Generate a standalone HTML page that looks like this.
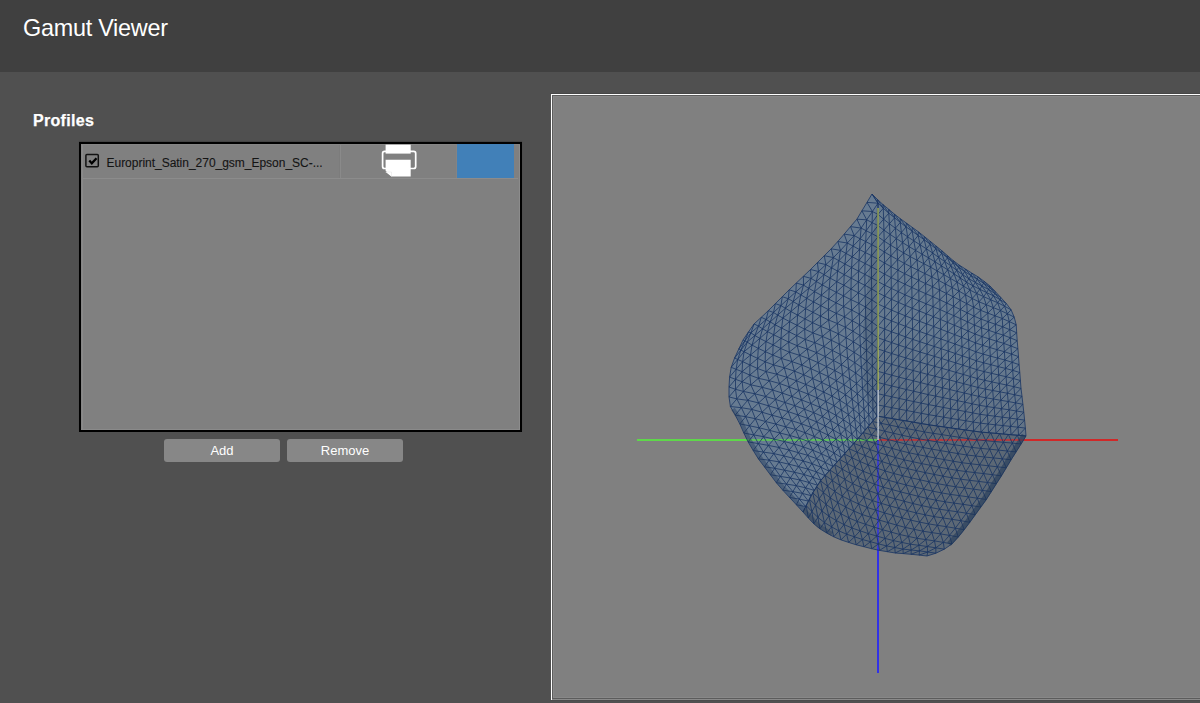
<!DOCTYPE html>
<html><head><meta charset="utf-8">
<style>
html,body{margin:0;padding:0;}
body{width:1200px;height:703px;overflow:hidden;background:#505050;position:relative;font-family:"Liberation Sans",sans-serif;}
.abs{position:absolute;}
#hdr{left:0;top:0;width:1200px;height:72px;background:#404040;}
#title{left:23px;top:15px;font-size:23.4px;color:#fff;white-space:nowrap;letter-spacing:-0.25px;}
#prof{left:33px;top:112px;font-size:16px;font-weight:bold;color:#fff;white-space:nowrap;letter-spacing:0.3px;-webkit-text-stroke:0.25px #fff;}
#list{left:79px;top:142px;width:439px;height:286px;border:2px solid #000;background:#808080;box-shadow:0 -1px 1px rgba(0,0,0,0.15);}
#listin{left:0;top:0;width:437px;height:284px;border:1px solid #8a8a8a;}
#row{left:1px;top:1px;width:436px;height:34px;background:#808080;border-bottom:1px solid #8c8c8c;}
#cb{left:85px;top:154px;width:11px;height:11px;border:1.5px solid #111;border-radius:1.5px;}
#rowtxt{left:106.5px;top:155.5px;font-size:12px;color:#141414;-webkit-text-stroke:0.1px #141414;white-space:nowrap;letter-spacing:-0.02px;}
#sep1{left:258px;top:0;width:1px;height:34px;background:#8a8a8a;}
#sep2{left:374px;top:0;width:1px;height:34px;background:#868686;}
#swatch{left:457px;top:144px;width:57px;height:34px;background:#4180b8;}
.btn{top:439px;height:23px;background:#878787;border-radius:3px;color:#fff;font-size:13px;text-align:center;line-height:23px;}
#add{left:164px;width:116px;}
#rem{left:287px;width:116px;}
#view{left:551px;top:94px;width:700px;height:606px;}
</style></head>
<body>
<div id="hdr" class="abs"></div>
<div id="title" class="abs">Gamut Viewer</div>
<div id="prof" class="abs">Profiles</div>
<div id="list" class="abs"></div>
<div class="abs" style="left:81px;top:144px;width:1px;height:286px;background:#858585"></div>
<div class="abs" style="left:82px;top:144px;width:1px;height:286px;background:#8a8a8a"></div>
<div class="abs" style="left:81px;top:429px;width:439px;height:1px;background:#8a8a8a"></div>
<div class="abs" style="left:519px;top:144px;width:1px;height:286px;background:#8c8c8c"></div>
<div class="abs" style="left:81px;top:144px;width:439px;height:1px;background:#858585"></div>
<div class="abs" style="left:83px;top:178px;width:435px;height:1px;background:#8c8c8c"></div>
<svg class="abs" style="left:82px;top:150px" width="22" height="22" viewBox="0 0 22 22"><rect x="3.9" y="4.6" width="12.4" height="12.2" rx="1" fill="none" stroke="#111" stroke-width="1.5"/><path d="M7.3 10.6 L9.8 13.4 L14.5 8.3" fill="none" stroke="#000" stroke-width="2.3"/></svg>
<div id="rowtxt" class="abs">Europrint_Satin_270_gsm_Epson_SC-...</div>
<div class="abs" style="left:340px;top:145px;width:1px;height:33px;background:#8a8a8a"></div>
<div class="abs" style="left:339px;top:145px;width:1px;height:33px;background:#7c7c7c"></div>
<svg class="abs" style="left:378px;top:142px" width="42" height="38" viewBox="0 0 42 38">
  <rect x="7.6" y="2.7" width="25.1" height="8.9" fill="#fff"/>
  <rect x="4.6" y="9.4" width="33.1" height="17.1" rx="2" fill="none" stroke="#fff" stroke-width="1.7"/>
  <path d="M7.6 17.8 H32.7 V34.6 H13.5 L7.6 28.7 Z" fill="#fff"/>
  <path d="M7.6 30 H13.5 V34.6 Z" fill="#fff"/>
  <path d="M7.6 30 H13.5 V34.6" fill="none" stroke="#e0e0e0" stroke-width="0.5"/>
</svg>
<div class="abs" style="left:456px;top:144px;width:1px;height:34px;background:#848484"></div>
<div id="swatch" class="abs"></div>
<div id="add" class="abs btn">Add</div>
<div id="rem" class="abs btn">Remove</div>
<div class="abs" style="left:550px;top:93px;width:650px;height:1px;background:#474747"></div>
<div class="abs" style="left:550px;top:700px;width:650px;height:1px;background:#4b4b4b"></div>
<div id="view" class="abs">
<svg width="649" height="609" style="position:absolute;left:0;top:0">
  <rect x="0" y="0" width="649" height="606" fill="#ffffff"/>
  <rect x="1" y="1" width="649" height="605" fill="#8a8a8a"/>
  <rect x="1" y="1" width="649" height="604" fill="#5c5c5c"/>
  <rect x="2" y="2" width="649" height="602" fill="#888"/>
  <rect x="3" y="3" width="649" height="600" fill="#808080"/>
</svg>
</div>
<svg id="mesh" class="abs" style="left:0;top:0" width="1200" height="703">
  <defs><linearGradient id="gB" gradientUnits="userSpaceOnUse" x1="930" y1="330" x2="890" y2="430"><stop offset="0" stop-color="#667a8f"/><stop offset="1" stop-color="#5f6d7d"/></linearGradient></defs>
<polygon points="872.0,194.0 878.0,203.2 878.0,214.4 878.0,225.6 878.0,236.8 878.0,248.0 878.0,259.2 878.0,270.4 878.0,281.6 878.0,292.8 878.0,304.0 877.9,315.2 877.8,326.4 877.7,337.6 877.6,348.8 877.5,360.0 877.4,371.2 877.3,382.4 877.2,393.6 877.1,404.8 877.0,416.0 877.0,416.0 873.1,420.7 869.2,425.3 865.2,430.0 861.3,434.7 857.4,439.3 853.4,443.9 849.3,448.4 845.2,453.0 841.2,457.5 837.1,462.0 833.0,466.5 829.0,471.1 824.9,475.6 820.9,480.2 817.6,485.3 814.3,490.4 811.2,495.7 808.4,501.1 805.7,506.6 803.0,512.0 803.0,512.0 796.3,504.7 789.5,497.4 782.8,490.2 776.3,482.7 770.3,474.7 764.4,466.8 758.4,458.9 753.2,450.5 748.1,441.9 743.8,433.0 739.8,423.9 735.2,415.1 730.4,406.5 729.0,396.9 729.0,387.0 729.6,377.1 731.2,367.3 734.6,358.0 738.8,349.0 743.0,340.0 743.0,340.0 748.5,331.9 754.1,323.9 761.3,317.3 768.4,310.6 775.4,303.6 782.3,296.7 789.2,289.8 796.3,283.0 803.4,276.3 810.5,269.5 817.4,262.6 824.3,255.7 831.2,248.8 837.8,241.5 844.2,234.1 850.5,226.6 856.9,219.2 861.9,210.8 867.0,202.4 872.0,194.0" fill="#677b91"/>
<polygon points="872.0,194.0 878.0,203.2 878.0,214.4 878.0,225.6 878.0,236.8 878.0,248.0 878.0,259.2 878.0,270.4 878.0,281.6 878.0,292.8 878.0,304.0 877.9,315.2 877.8,326.4 877.7,337.6 877.6,348.8 877.5,360.0 877.4,371.2 877.3,382.4 877.2,393.6 877.1,404.8 877.0,416.0 877.0,416.0 884.4,417.3 891.8,418.5 899.2,419.8 906.7,421.0 914.1,422.3 921.5,423.6 928.9,424.8 936.3,425.9 943.8,426.9 951.2,428.0 958.7,429.0 966.1,430.1 973.6,431.1 981.0,432.1 988.5,432.7 996.0,433.4 1003.5,434.0 1011.0,434.7 1018.5,435.3 1026.0,436.0 1026.0,436.0 1025.4,428.1 1024.6,420.1 1023.8,412.2 1022.9,404.3 1022.0,396.3 1021.0,388.4 1020.4,380.5 1019.8,372.5 1019.1,364.6 1018.5,356.6 1017.9,348.7 1017.2,340.7 1016.7,332.8 1016.2,324.8 1014.2,317.1 1011.1,309.8 1006.3,303.5 1000.9,297.6 995.5,291.8 990.0,286.0 990.0,286.0 984.1,281.3 978.1,276.9 971.7,273.0 965.4,269.0 959.1,265.0 953.1,260.5 947.4,255.6 941.7,250.6 935.9,245.9 930.1,241.2 924.3,236.5 918.4,231.8 912.3,227.4 906.3,223.0 900.2,218.6 894.3,214.0 888.6,209.2 882.8,204.4 877.3,199.3 872.0,194.0" fill="url(#gB)"/>
<polygon points="877.0,416.0 885.7,417.5 894.4,419.0 903.2,420.4 911.9,421.9 920.6,423.4 929.3,424.9 938.1,426.1 946.9,427.4 955.6,428.6 964.4,429.8 973.2,431.0 981.9,432.2 990.7,432.9 999.6,433.7 1008.4,434.5 1017.2,435.2 1026.0,436.0 1026.0,436.0 1021.1,444.0 1016.1,451.9 1011.1,459.8 1006.3,467.8 1001.4,475.9 996.4,483.7 991.4,491.6 986.3,499.5 980.8,507.1 975.3,514.7 969.8,522.3 964.2,529.7 958.3,537.0 952.0,543.9 944.3,549.2 935.9,553.2 927.0,556.0 927.0,556.0 919.1,555.1 911.1,554.3 903.2,553.6 895.2,553.0 887.3,551.7 879.5,550.4 871.7,548.7 863.9,546.7 856.2,544.8 848.6,542.4 841.0,539.9 833.7,536.8 826.7,533.0 819.9,528.8 813.8,523.8 808.3,518.0 803.0,512.0 803.0,512.0 806.2,505.6 809.4,499.2 812.7,492.8 816.6,486.8 820.5,480.8 825.2,475.4 829.9,470.0 834.7,464.7 839.5,459.3 844.3,454.0 849.1,448.7 853.9,443.4 858.6,437.9 863.2,432.5 867.8,427.0 872.4,421.5 877.0,416.0" fill="#5c6875"/>
<rect x="637" y="439" width="110" height="2" fill="#5ed84a"/>
<rect x="747" y="439" width="131" height="2" fill="#5ed84a" fill-opacity="0.7"/>
<rect x="878" y="439" width="146" height="2" fill="#d02828" fill-opacity="0.7"/>
<rect x="1024" y="439" width="94" height="2" fill="#d02828"/>
<rect x="877" y="440" width="2" height="108" fill="#3232e6" fill-opacity="0.75"/>
<rect x="877" y="548" width="2" height="125" fill="#3232e6"/>
<path d="M872.0,194.0 878.0,203.2 878.0,214.4 878.0,225.6 878.0,236.8 878.0,248.0 878.0,259.2 878.0,270.4 878.0,281.6 878.0,292.8 878.0,304.0 877.9,315.2 877.8,326.4 877.7,337.6 877.6,348.8 877.5,360.0 877.4,371.2 877.3,382.4 877.2,393.6 877.1,404.8 877.0,416.0 M867.0,202.4 872.4,211.5 872.1,222.6 871.8,233.6 871.7,244.7 871.6,255.7 871.5,266.8 871.5,277.9 871.6,288.9 871.8,299.9 871.9,310.9 871.9,322.0 872.0,333.0 872.1,344.0 872.2,354.9 872.3,365.9 872.4,376.9 872.6,387.8 872.8,398.8 872.9,409.7 873.1,420.7 M861.9,210.8 866.7,219.8 866.2,230.7 865.7,241.6 865.3,252.5 865.1,263.5 864.9,274.4 864.9,285.3 865.2,296.2 865.5,307.0 865.7,317.9 865.9,328.7 866.2,339.5 866.5,350.3 866.8,361.1 867.1,371.8 867.5,382.6 867.9,393.3 868.3,404.0 868.7,414.6 869.2,425.3 M856.9,219.2 861.1,228.1 860.2,238.8 859.5,249.6 859.0,260.4 858.6,271.2 858.4,282.0 858.4,292.8 858.9,303.4 859.3,314.1 859.6,324.8 859.9,335.5 860.4,346.1 860.8,356.7 861.4,367.2 862.0,377.7 862.5,388.2 863.2,398.7 863.9,409.1 864.6,419.6 865.2,430.0 M850.5,226.6 854.2,235.6 853.1,246.1 852.2,256.8 851.6,267.5 851.2,278.2 851.0,289.0 851.0,299.6 851.7,310.1 852.3,320.7 852.9,331.2 853.4,341.8 854.1,352.3 854.8,362.7 855.6,373.0 856.5,383.4 857.3,393.7 858.3,404.0 859.3,414.2 860.3,424.4 861.3,434.7 M844.2,234.1 847.3,243.0 846.0,253.4 844.9,264.0 844.2,274.6 843.8,285.2 843.5,295.9 843.6,306.5 844.5,316.8 845.4,327.2 846.1,337.7 846.8,348.1 847.7,358.4 848.7,368.7 849.8,378.9 851.0,389.1 852.1,399.2 853.4,409.3 854.7,419.3 856.1,429.3 857.4,439.3 M837.8,241.5 840.5,250.4 838.9,260.7 837.6,271.1 836.8,281.7 836.3,292.3 836.0,302.8 836.2,313.3 837.3,323.5 838.4,333.8 839.3,344.1 840.2,354.4 841.4,364.6 842.6,374.7 844.0,384.7 845.4,394.7 846.8,404.7 848.4,414.5 850.1,424.3 851.7,434.1 853.4,443.9 M831.2,248.8 833.4,257.6 831.6,267.8 830.1,278.1 829.2,288.6 828.7,299.1 828.4,309.6 828.6,320.0 830.0,330.1 831.2,340.2 832.3,350.4 833.5,360.5 834.8,370.6 836.3,380.6 838.0,390.4 839.7,400.2 841.4,410.0 843.4,419.7 845.3,429.2 847.3,438.8 849.3,448.4 M824.3,255.7 825.9,264.6 824.0,274.6 822.3,284.9 821.3,295.3 820.8,305.7 820.5,316.1 820.7,326.4 822.4,336.4 823.9,346.4 825.2,356.5 826.5,366.6 828.2,376.5 829.9,386.3 832.0,396.0 834.0,405.6 836.0,415.3 838.2,424.8 840.6,434.2 842.9,443.6 845.2,453.0 M817.4,262.6 818.5,271.5 816.3,281.5 814.5,291.6 813.5,301.9 812.9,312.3 812.6,322.7 812.9,332.9 814.8,342.7 816.6,352.6 818.1,362.6 819.6,372.6 821.6,382.4 823.6,392.1 825.9,401.6 828.2,411.1 830.5,420.6 833.1,429.9 835.8,439.1 838.5,448.3 841.2,457.5 M810.5,269.5 811.1,278.4 808.7,288.3 806.7,298.3 805.6,308.6 805.0,318.9 804.7,329.2 805.1,339.4 807.2,349.1 809.2,358.8 810.9,368.7 812.7,378.6 814.9,388.2 817.2,397.8 819.8,407.2 822.5,416.5 825.1,425.9 828.0,435.0 831.0,444.0 834.1,453.0 837.1,462.0 M803.4,276.3 803.5,285.1 800.9,294.9 798.8,304.9 797.6,315.1 797.0,325.3 796.7,335.6 797.2,345.7 799.6,355.3 801.8,365.0 803.7,374.8 805.8,384.5 808.2,394.1 810.8,403.5 813.7,412.7 816.7,421.9 819.6,431.1 822.9,440.0 826.3,448.9 829.7,457.7 833.0,466.5 M796.3,283.0 795.9,291.9 793.2,301.6 790.9,311.5 789.6,321.6 789.0,331.8 788.7,342.1 789.3,352.1 791.9,361.6 794.4,371.1 796.5,380.8 798.8,390.5 801.5,399.9 804.4,409.2 807.6,418.3 810.9,427.3 814.2,436.4 817.8,445.1 821.5,453.8 825.2,462.4 829.0,471.1 M789.2,289.8 788.3,298.7 785.4,308.3 782.9,318.1 781.6,328.1 781.0,338.3 780.7,348.5 781.3,358.4 784.3,367.8 786.9,377.3 789.3,386.9 791.8,396.4 794.8,405.7 797.9,414.9 801.5,423.8 805.1,432.7 808.7,441.6 812.6,450.2 816.7,458.7 820.8,467.2 824.9,475.6 M782.3,296.7 780.9,305.6 777.7,315.1 775.1,324.8 773.7,334.8 773.1,344.9 772.8,355.0 773.5,364.9 776.7,374.2 779.6,383.5 782.2,393.0 784.9,402.5 788.2,411.6 791.6,420.7 795.5,429.4 799.4,438.2 803.3,446.9 807.6,455.3 812.0,463.6 816.4,471.9 820.9,480.2 M775.4,303.6 773.5,312.5 770.2,321.9 767.5,331.6 766.0,341.6 765.4,351.7 765.2,361.8 766.0,371.6 769.4,380.7 772.6,390.0 775.5,399.4 778.5,408.8 782.0,417.9 785.7,426.9 790.0,435.5 794.2,444.1 798.4,452.7 803.1,460.9 807.9,469.1 812.8,477.2 817.6,485.3 M768.4,310.6 766.1,319.5 762.6,328.8 759.8,338.4 758.3,348.4 757.7,358.4 757.5,368.5 758.4,378.3 762.2,387.3 765.6,396.5 768.7,405.9 772.0,415.2 775.8,424.1 779.9,433.0 784.4,441.5 789.0,450.0 793.6,458.4 798.6,466.6 803.9,474.5 809.1,482.5 814.3,490.4 M761.3,317.3 758.5,326.2 754.9,335.5 752.0,345.1 750.5,355.0 749.9,365.0 749.8,375.1 750.8,384.8 754.9,393.8 758.6,402.9 762.0,412.2 765.5,421.5 769.7,430.4 774.0,439.1 779.0,447.5 783.9,455.9 788.9,464.2 794.3,472.2 799.9,480.0 805.6,487.8 811.2,495.7 M754.1,323.9 750.9,332.9 747.2,342.1 744.1,351.7 742.6,361.6 742.1,371.6 742.1,381.7 743.3,391.4 747.7,400.3 751.7,409.4 755.4,418.7 759.2,427.8 763.7,436.7 768.4,445.4 773.8,453.6 779.1,461.9 784.5,470.2 790.3,478.0 796.4,485.7 802.4,493.4 808.4,501.1 M748.5,331.9 744.8,340.9 740.9,350.1 737.7,359.5 736.1,369.3 735.5,379.3 735.5,389.3 736.8,398.9 741.4,407.7 745.7,416.7 749.6,425.8 753.7,434.9 758.4,443.6 763.4,452.1 769.1,460.2 774.7,468.3 780.4,476.4 786.5,484.1 792.9,491.6 799.3,499.1 805.7,506.6 M743.0,340.0 738.8,349.0 734.6,358.0 731.2,367.3 729.6,377.1 729.0,387.0 729.0,396.9 730.4,406.5 735.2,415.1 739.8,423.9 743.8,433.0 748.1,441.9 753.2,450.5 758.4,458.9 764.4,466.8 770.3,474.7 776.3,482.7 782.8,490.2 789.5,497.4 796.3,504.7 803.0,512.0 M872.0,194.0 867.0,202.4 861.9,210.8 856.9,219.2 850.5,226.6 844.2,234.1 837.8,241.5 831.2,248.8 824.3,255.7 817.4,262.6 810.5,269.5 803.4,276.3 796.3,283.0 789.2,289.8 782.3,296.7 775.4,303.6 768.4,310.6 761.3,317.3 754.1,323.9 748.5,331.9 743.0,340.0 M878.0,203.2 872.4,211.5 866.7,219.8 861.1,228.1 854.2,235.6 847.3,243.0 840.5,250.4 833.4,257.6 825.9,264.6 818.5,271.5 811.1,278.4 803.5,285.1 795.9,291.9 788.3,298.7 780.9,305.6 773.5,312.5 766.1,319.5 758.5,326.2 750.9,332.9 744.8,340.9 738.8,349.0 M878.0,214.4 872.1,222.6 866.2,230.7 860.2,238.8 853.1,246.1 846.0,253.4 838.9,260.7 831.6,267.8 824.0,274.6 816.3,281.5 808.7,288.3 800.9,294.9 793.2,301.6 785.4,308.3 777.7,315.1 770.2,321.9 762.6,328.8 754.9,335.5 747.2,342.1 740.9,350.1 734.6,358.0 M878.0,225.6 871.8,233.6 865.7,241.6 859.5,249.6 852.2,256.8 844.9,264.0 837.6,271.1 830.1,278.1 822.3,284.9 814.5,291.6 806.7,298.3 798.8,304.9 790.9,311.5 782.9,318.1 775.1,324.8 767.5,331.6 759.8,338.4 752.0,345.1 744.1,351.7 737.7,359.5 731.2,367.3 M878.0,236.8 871.7,244.7 865.3,252.5 859.0,260.4 851.6,267.5 844.2,274.6 836.8,281.7 829.2,288.6 821.3,295.3 813.5,301.9 805.6,308.6 797.6,315.1 789.6,321.6 781.6,328.1 773.7,334.8 766.0,341.6 758.3,348.4 750.5,355.0 742.6,361.6 736.1,369.3 729.6,377.1 M878.0,248.0 871.6,255.7 865.1,263.5 858.6,271.2 851.2,278.2 843.8,285.2 836.3,292.3 828.7,299.1 820.8,305.7 812.9,312.3 805.0,318.9 797.0,325.3 789.0,331.8 781.0,338.3 773.1,344.9 765.4,351.7 757.7,358.4 749.9,365.0 742.1,371.6 735.5,379.3 729.0,387.0 M878.0,259.2 871.5,266.8 864.9,274.4 858.4,282.0 851.0,289.0 843.5,295.9 836.0,302.8 828.4,309.6 820.5,316.1 812.6,322.7 804.7,329.2 796.7,335.6 788.7,342.1 780.7,348.5 772.8,355.0 765.2,361.8 757.5,368.5 749.8,375.1 742.1,381.7 735.5,389.3 729.0,396.9 M878.0,270.4 871.5,277.9 864.9,285.3 858.4,292.8 851.0,299.6 843.6,306.5 836.2,313.3 828.6,320.0 820.7,326.4 812.9,332.9 805.1,339.4 797.2,345.7 789.3,352.1 781.3,358.4 773.5,364.9 766.0,371.6 758.4,378.3 750.8,384.8 743.3,391.4 736.8,398.9 730.4,406.5 M878.0,281.6 871.6,288.9 865.2,296.2 858.9,303.4 851.7,310.1 844.5,316.8 837.3,323.5 830.0,330.1 822.4,336.4 814.8,342.7 807.2,349.1 799.6,355.3 791.9,361.6 784.3,367.8 776.7,374.2 769.4,380.7 762.2,387.3 754.9,393.8 747.7,400.3 741.4,407.7 735.2,415.1 M878.0,292.8 871.8,299.9 865.5,307.0 859.3,314.1 852.3,320.7 845.4,327.2 838.4,333.8 831.2,340.2 823.9,346.4 816.6,352.6 809.2,358.8 801.8,365.0 794.4,371.1 786.9,377.3 779.6,383.5 772.6,390.0 765.6,396.5 758.6,402.9 751.7,409.4 745.7,416.7 739.8,423.9 M878.0,304.0 871.9,310.9 865.7,317.9 859.6,324.8 852.9,331.2 846.1,337.7 839.3,344.1 832.3,350.4 825.2,356.5 818.1,362.6 810.9,368.7 803.7,374.8 796.5,380.8 789.3,386.9 782.2,393.0 775.5,399.4 768.7,405.9 762.0,412.2 755.4,418.7 749.6,425.8 743.8,433.0 M877.9,315.2 871.9,322.0 865.9,328.7 859.9,335.5 853.4,341.8 846.8,348.1 840.2,354.4 833.5,360.5 826.5,366.6 819.6,372.6 812.7,378.6 805.8,384.5 798.8,390.5 791.8,396.4 784.9,402.5 778.5,408.8 772.0,415.2 765.5,421.5 759.2,427.8 753.7,434.9 748.1,441.9 M877.8,326.4 872.0,333.0 866.2,339.5 860.4,346.1 854.1,352.3 847.7,358.4 841.4,364.6 834.8,370.6 828.2,376.5 821.6,382.4 814.9,388.2 808.2,394.1 801.5,399.9 794.8,405.7 788.2,411.6 782.0,417.9 775.8,424.1 769.7,430.4 763.7,436.7 758.4,443.6 753.2,450.5 M877.7,337.6 872.1,344.0 866.5,350.3 860.8,356.7 854.8,362.7 848.7,368.7 842.6,374.7 836.3,380.6 829.9,386.3 823.6,392.1 817.2,397.8 810.8,403.5 804.4,409.2 797.9,414.9 791.6,420.7 785.7,426.9 779.9,433.0 774.0,439.1 768.4,445.4 763.4,452.1 758.4,458.9 M877.6,348.8 872.2,354.9 866.8,361.1 861.4,367.2 855.6,373.0 849.8,378.9 844.0,384.7 838.0,390.4 832.0,396.0 825.9,401.6 819.8,407.2 813.7,412.7 807.6,418.3 801.5,423.8 795.5,429.4 790.0,435.5 784.4,441.5 779.0,447.5 773.8,453.6 769.1,460.2 764.4,466.8 M877.5,360.0 872.3,365.9 867.1,371.8 862.0,377.7 856.5,383.4 851.0,389.1 845.4,394.7 839.7,400.2 834.0,405.6 828.2,411.1 822.5,416.5 816.7,421.9 810.9,427.3 805.1,432.7 799.4,438.2 794.2,444.1 789.0,450.0 783.9,455.9 779.1,461.9 774.7,468.3 770.3,474.7 M877.4,371.2 872.4,376.9 867.5,382.6 862.5,388.2 857.3,393.7 852.1,399.2 846.8,404.7 841.4,410.0 836.0,415.3 830.5,420.6 825.1,425.9 819.6,431.1 814.2,436.4 808.7,441.6 803.3,446.9 798.4,452.7 793.6,458.4 788.9,464.2 784.5,470.2 780.4,476.4 776.3,482.7 M877.3,382.4 872.6,387.8 867.9,393.3 863.2,398.7 858.3,404.0 853.4,409.3 848.4,414.5 843.4,419.7 838.2,424.8 833.1,429.9 828.0,435.0 822.9,440.0 817.8,445.1 812.6,450.2 807.6,455.3 803.1,460.9 798.6,466.6 794.3,472.2 790.3,478.0 786.5,484.1 782.8,490.2 M877.2,393.6 872.8,398.8 868.3,404.0 863.9,409.1 859.3,414.2 854.7,419.3 850.1,424.3 845.3,429.2 840.6,434.2 835.8,439.1 831.0,444.0 826.3,448.9 821.5,453.8 816.7,458.7 812.0,463.6 807.9,469.1 803.9,474.5 799.9,480.0 796.4,485.7 792.9,491.6 789.5,497.4 M877.1,404.8 872.9,409.7 868.7,414.6 864.6,419.6 860.3,424.4 856.1,429.3 851.7,434.1 847.3,438.8 842.9,443.6 838.5,448.3 834.1,453.0 829.7,457.7 825.2,462.4 820.8,467.2 816.4,471.9 812.8,477.2 809.1,482.5 805.6,487.8 802.4,493.4 799.3,499.1 796.3,504.7 M877.0,416.0 873.1,420.7 869.2,425.3 865.2,430.0 861.3,434.7 857.4,439.3 853.4,443.9 849.3,448.4 845.2,453.0 841.2,457.5 837.1,462.0 833.0,466.5 829.0,471.1 824.9,475.6 820.9,480.2 817.6,485.3 814.3,490.4 811.2,495.7 808.4,501.1 805.7,506.6 803.0,512.0 M878.0,203.2 867.0,202.4 M878.0,214.4 872.4,211.5 861.9,210.8 M878.0,225.6 872.1,222.6 866.7,219.8 856.9,219.2 M878.0,236.8 871.8,233.6 866.2,230.7 861.1,228.1 850.5,226.6 M878.0,248.0 871.7,244.7 865.7,241.6 860.2,238.8 854.2,235.6 844.2,234.1 M878.0,259.2 871.6,255.7 865.3,252.5 859.5,249.6 853.1,246.1 847.3,243.0 837.8,241.5 M878.0,270.4 871.5,266.8 865.1,263.5 859.0,260.4 852.2,256.8 846.0,253.4 840.5,250.4 831.2,248.8 M878.0,281.6 871.5,277.9 864.9,274.4 858.6,271.2 851.6,267.5 844.9,264.0 838.9,260.7 833.4,257.6 824.3,255.7 M878.0,292.8 871.6,288.9 864.9,285.3 858.4,282.0 851.2,278.2 844.2,274.6 837.6,271.1 831.6,267.8 825.9,264.6 817.4,262.6 M878.0,304.0 871.8,299.9 865.2,296.2 858.4,292.8 851.0,289.0 843.8,285.2 836.8,281.7 830.1,278.1 824.0,274.6 818.5,271.5 810.5,269.5 M877.9,315.2 871.9,310.9 865.5,307.0 858.9,303.4 851.0,299.6 843.5,295.9 836.3,292.3 829.2,288.6 822.3,284.9 816.3,281.5 811.1,278.4 803.4,276.3 M877.8,326.4 871.9,322.0 865.7,317.9 859.3,314.1 851.7,310.1 843.6,306.5 836.0,302.8 828.7,299.1 821.3,295.3 814.5,291.6 808.7,288.3 803.5,285.1 796.3,283.0 M877.7,337.6 872.0,333.0 865.9,328.7 859.6,324.8 852.3,320.7 844.5,316.8 836.2,313.3 828.4,309.6 820.8,305.7 813.5,301.9 806.7,298.3 800.9,294.9 795.9,291.9 789.2,289.8 M877.6,348.8 872.1,344.0 866.2,339.5 859.9,335.5 852.9,331.2 845.4,327.2 837.3,323.5 828.6,320.0 820.5,316.1 812.9,312.3 805.6,308.6 798.8,304.9 793.2,301.6 788.3,298.7 782.3,296.7 M877.5,360.0 872.2,354.9 866.5,350.3 860.4,346.1 853.4,341.8 846.1,337.7 838.4,333.8 830.0,330.1 820.7,326.4 812.6,322.7 805.0,318.9 797.6,315.1 790.9,311.5 785.4,308.3 780.9,305.6 775.4,303.6 M877.4,371.2 872.3,365.9 866.8,361.1 860.8,356.7 854.1,352.3 846.8,348.1 839.3,344.1 831.2,340.2 822.4,336.4 812.9,332.9 804.7,329.2 797.0,325.3 789.6,321.6 782.9,318.1 777.7,315.1 773.5,312.5 768.4,310.6 M877.3,382.4 872.4,376.9 867.1,371.8 861.4,367.2 854.8,362.7 847.7,358.4 840.2,354.4 832.3,350.4 823.9,346.4 814.8,342.7 805.1,339.4 796.7,335.6 789.0,331.8 781.6,328.1 775.1,324.8 770.2,321.9 766.1,319.5 761.3,317.3 M877.2,393.6 872.6,387.8 867.5,382.6 862.0,377.7 855.6,373.0 848.7,368.7 841.4,364.6 833.5,360.5 825.2,356.5 816.6,352.6 807.2,349.1 797.2,345.7 788.7,342.1 781.0,338.3 773.7,334.8 767.5,331.6 762.6,328.8 758.5,326.2 754.1,323.9 M877.1,404.8 872.8,398.8 867.9,393.3 862.5,388.2 856.5,383.4 849.8,378.9 842.6,374.7 834.8,370.6 826.5,366.6 818.1,362.6 809.2,358.8 799.6,355.3 789.3,352.1 780.7,348.5 773.1,344.9 766.0,341.6 759.8,338.4 754.9,335.5 750.9,332.9 748.5,331.9 M877.0,416.0 872.9,409.7 868.3,404.0 863.2,398.7 857.3,393.7 851.0,389.1 844.0,384.7 836.3,380.6 828.2,376.5 819.6,372.6 810.9,368.7 801.8,365.0 791.9,361.6 781.3,358.4 772.8,355.0 765.4,351.7 758.3,348.4 752.0,345.1 747.2,342.1 744.8,340.9 743.0,340.0 M873.1,420.7 868.7,414.6 863.9,409.1 858.3,404.0 852.1,399.2 845.4,394.7 838.0,390.4 829.9,386.3 821.6,382.4 812.7,378.6 803.7,374.8 794.4,371.1 784.3,367.8 773.5,364.9 765.2,361.8 757.7,358.4 750.5,355.0 744.1,351.7 740.9,350.1 738.8,349.0 M869.2,425.3 864.6,419.6 859.3,414.2 853.4,409.3 846.8,404.7 839.7,400.2 832.0,396.0 823.6,392.1 814.9,388.2 805.8,384.5 796.5,380.8 786.9,377.3 776.7,374.2 766.0,371.6 757.5,368.5 749.9,365.0 742.6,361.6 737.7,359.5 734.6,358.0 M865.2,430.0 860.3,424.4 854.7,419.3 848.4,414.5 841.4,410.0 834.0,405.6 825.9,401.6 817.2,397.8 808.2,394.1 798.8,390.5 789.3,386.9 779.6,383.5 769.4,380.7 758.4,378.3 749.8,375.1 742.1,371.6 736.1,369.3 731.2,367.3 M861.3,434.7 856.1,429.3 850.1,424.3 843.4,419.7 836.0,415.3 828.2,411.1 819.8,407.2 810.8,403.5 801.5,399.9 791.8,396.4 782.2,393.0 772.6,390.0 762.2,387.3 750.8,384.8 742.1,381.7 735.5,379.3 729.6,377.1 M857.4,439.3 851.7,434.1 845.3,429.2 838.2,424.8 830.5,420.6 822.5,416.5 813.7,412.7 804.4,409.2 794.8,405.7 784.9,402.5 775.5,399.4 765.6,396.5 754.9,393.8 743.3,391.4 735.5,389.3 729.0,387.0 M853.4,443.9 847.3,438.8 840.6,434.2 833.1,429.9 825.1,425.9 816.7,421.9 807.6,418.3 797.9,414.9 788.2,411.6 778.5,408.8 768.7,405.9 758.6,402.9 747.7,400.3 736.8,398.9 729.0,396.9 M849.3,448.4 842.9,443.6 835.8,439.1 828.0,435.0 819.6,431.1 810.9,427.3 801.5,423.8 791.6,420.7 782.0,417.9 772.0,415.2 762.0,412.2 751.7,409.4 741.4,407.7 730.4,406.5 M845.2,453.0 838.5,448.3 831.0,444.0 822.9,440.0 814.2,436.4 805.1,432.7 795.5,429.4 785.7,426.9 775.8,424.1 765.5,421.5 755.4,418.7 745.7,416.7 735.2,415.1 M841.2,457.5 834.1,453.0 826.3,448.9 817.8,445.1 808.7,441.6 799.4,438.2 790.0,435.5 779.9,433.0 769.7,430.4 759.2,427.8 749.6,425.8 739.8,423.9 M837.1,462.0 829.7,457.7 821.5,453.8 812.6,450.2 803.3,446.9 794.2,444.1 784.4,441.5 774.0,439.1 763.7,436.7 753.7,434.9 743.8,433.0 M833.0,466.5 825.2,462.4 816.7,458.7 807.6,455.3 798.4,452.7 789.0,450.0 779.0,447.5 768.4,445.4 758.4,443.6 748.1,441.9 M829.0,471.1 820.8,467.2 812.0,463.6 803.1,460.9 793.6,458.4 783.9,455.9 773.8,453.6 763.4,452.1 753.2,450.5 M824.9,475.6 816.4,471.9 807.9,469.1 798.6,466.6 788.9,464.2 779.1,461.9 769.1,460.2 758.4,458.9 M820.9,480.2 812.8,477.2 803.9,474.5 794.3,472.2 784.5,470.2 774.7,468.3 764.4,466.8 M817.6,485.3 809.1,482.5 799.9,480.0 790.3,478.0 780.4,476.4 770.3,474.7 M814.3,490.4 805.6,487.8 796.4,485.7 786.5,484.1 776.3,482.7 M811.2,495.7 802.4,493.4 792.9,491.6 782.8,490.2 M808.4,501.1 799.3,499.1 789.5,497.4 M805.7,506.6 796.3,504.7" fill="none" stroke="#183462" stroke-width="0.8" stroke-opacity="1"/>
<path d="M872.0,194.0 878.0,203.2 878.0,214.4 878.0,225.6 878.0,236.8 878.0,248.0 878.0,259.2 878.0,270.4 878.0,281.6 878.0,292.8 878.0,304.0 877.9,315.2 877.8,326.4 877.7,337.6 877.6,348.8 877.5,360.0 877.4,371.2 877.3,382.4 877.2,393.6 877.1,404.8 877.0,416.0 M877.3,199.3 883.3,208.3 883.6,219.2 883.9,230.1 884.2,241.1 884.4,252.0 884.5,263.0 884.5,274.1 884.6,285.1 884.6,296.1 884.7,307.1 884.6,318.1 884.6,329.1 884.6,340.2 884.5,351.2 884.5,362.2 884.5,373.2 884.5,384.2 884.5,395.2 884.4,406.2 884.4,417.3 M882.8,204.4 888.8,213.2 889.4,223.8 890.0,234.4 890.5,245.1 890.9,255.9 891.1,266.7 891.2,277.6 891.3,288.4 891.4,299.3 891.5,310.1 891.5,320.9 891.5,331.8 891.6,342.6 891.6,353.5 891.6,364.3 891.7,375.2 891.7,386.0 891.8,396.8 891.8,407.7 891.8,418.5 M888.6,209.2 894.6,217.8 895.4,228.2 896.3,238.5 897.1,249.0 897.6,259.6 897.9,270.2 898.0,280.9 898.2,291.6 898.3,302.3 898.4,313.0 898.5,323.6 898.6,334.3 898.6,345.0 898.7,355.7 898.8,366.4 898.9,377.1 899.0,387.7 899.1,398.4 899.2,409.1 899.2,419.8 M894.3,214.0 900.3,222.4 901.4,232.5 902.6,242.6 903.6,252.9 904.3,263.3 904.7,273.7 904.9,284.2 905.0,294.8 905.2,305.3 905.4,315.8 905.5,326.3 905.6,336.9 905.7,347.4 905.8,357.9 906.0,368.4 906.1,379.0 906.3,389.5 906.4,400.0 906.6,410.5 906.7,421.0 M900.2,218.6 906.1,226.9 907.6,236.8 909.0,246.6 910.2,256.6 911.0,266.8 911.6,277.1 911.8,287.5 912.0,297.9 912.2,308.2 912.4,318.6 912.5,329.0 912.7,339.4 912.8,349.7 912.9,360.1 913.1,370.5 913.4,380.8 913.6,391.2 913.8,401.6 913.9,411.9 914.1,422.3 M906.3,223.0 912.2,231.2 913.8,240.8 915.5,250.4 917.0,260.2 918.0,270.2 918.6,280.3 918.8,290.6 919.0,300.8 919.3,311.0 919.5,321.3 919.6,331.5 919.8,341.7 920.0,352.0 920.1,362.2 920.4,372.4 920.6,382.6 920.9,392.9 921.1,403.1 921.3,413.3 921.5,423.6 M912.3,227.4 918.2,235.5 920.1,244.8 922.1,254.2 923.8,263.7 924.9,273.6 925.6,283.6 925.8,293.7 926.1,303.8 926.3,313.8 926.6,323.9 926.7,334.0 926.9,344.1 927.1,354.2 927.3,364.3 927.6,374.4 927.9,384.5 928.2,394.6 928.5,404.6 928.7,414.7 928.9,424.8 M918.4,231.8 924.2,239.7 926.4,248.8 928.6,257.9 930.6,267.2 931.8,276.9 932.6,286.7 932.9,296.7 933.1,306.6 933.4,316.6 933.7,326.5 933.9,336.5 934.1,346.4 934.3,356.3 934.6,366.3 934.9,376.2 935.2,386.1 935.6,396.1 935.9,406.0 936.1,415.9 936.3,425.9 M924.3,236.5 930.1,244.2 932.6,253.0 935.0,261.8 937.2,270.9 938.6,280.4 939.5,290.1 939.8,299.8 940.1,309.6 940.4,319.4 940.7,329.2 940.9,339.0 941.2,348.7 941.5,358.5 941.7,368.3 942.1,378.1 942.5,387.8 942.9,397.6 943.2,407.4 943.6,417.2 943.8,426.9 M930.1,241.2 935.9,248.7 938.6,257.3 941.4,265.8 943.8,274.7 945.4,284.0 946.4,293.4 946.7,303.0 947.0,312.7 947.3,322.3 947.7,331.9 948.0,341.5 948.3,351.1 948.6,360.7 948.9,370.3 949.3,379.9 949.7,389.5 950.2,399.1 950.6,408.8 951.0,418.4 951.2,428.0 M935.9,245.9 941.7,253.3 944.7,261.5 947.7,269.8 950.4,278.4 952.1,287.5 953.2,296.8 953.6,306.3 953.9,315.7 954.3,325.2 954.7,334.6 955.0,344.0 955.3,353.5 955.7,362.9 956.0,372.4 956.5,381.8 957.0,391.3 957.5,400.7 957.9,410.1 958.4,419.6 958.7,429.0 M941.7,250.6 947.5,257.8 950.8,265.8 954.1,273.9 957.0,282.2 958.9,291.1 960.1,300.2 960.4,309.5 960.8,318.8 961.2,328.0 961.6,337.3 962.0,346.6 962.4,355.9 962.8,365.2 963.2,374.4 963.7,383.7 964.3,393.0 964.8,402.2 965.3,411.5 965.8,420.8 966.1,430.1 M947.4,255.6 953.1,262.6 956.7,270.3 960.3,278.0 963.5,286.1 965.5,294.8 966.8,303.7 967.2,312.8 967.6,321.9 968.1,331.0 968.6,340.1 969.0,349.2 969.4,358.3 969.8,367.4 970.3,376.5 970.9,385.6 971.5,394.7 972.1,403.8 972.7,412.9 973.2,422.0 973.6,431.1 M953.1,260.5 958.8,267.3 962.7,274.7 966.5,282.2 969.9,290.0 972.2,298.5 973.6,307.2 974.0,316.1 974.4,325.1 975.0,334.0 975.5,342.9 975.9,351.8 976.4,360.8 976.9,369.7 977.4,378.6 978.0,387.5 978.7,396.4 979.4,405.3 980.0,414.3 980.6,423.2 981.0,432.1 M959.1,265.0 964.7,271.6 968.9,278.8 973.0,285.9 976.7,293.5 979.0,301.8 980.6,310.3 981.0,319.1 981.5,327.8 982.0,336.6 982.6,345.3 983.1,354.1 983.6,362.8 984.1,371.6 984.6,380.3 985.3,389.1 986.0,397.8 986.8,406.5 987.4,415.3 988.1,424.0 988.5,432.7 M965.4,269.0 971.0,275.5 975.4,282.4 979.8,289.3 983.6,296.6 986.2,304.7 987.8,313.1 988.2,321.7 988.7,330.3 989.3,338.9 989.8,347.5 990.3,356.1 990.9,364.7 991.4,373.3 991.9,381.9 992.7,390.5 993.4,399.0 994.2,407.6 994.9,416.2 995.5,424.8 996.0,433.4 M971.7,273.0 977.3,279.3 981.9,286.0 986.6,292.6 990.7,299.8 993.3,307.6 995.0,315.8 995.4,324.3 995.9,332.8 996.5,341.2 997.1,349.7 997.6,358.1 998.2,366.6 998.7,375.0 999.3,383.5 1000.0,391.9 1000.8,400.3 1001.6,408.7 1002.3,417.2 1003.0,425.6 1003.5,434.0 M978.1,276.9 983.6,283.1 988.6,289.4 993.4,295.8 997.7,302.7 1000.5,310.5 1002.3,318.5 1002.7,326.8 1003.2,335.1 1003.8,343.4 1004.4,351.7 1004.9,360.0 1005.5,368.4 1006.1,376.7 1006.6,385.0 1007.4,393.2 1008.2,401.5 1009.1,409.8 1009.8,418.1 1010.5,426.4 1011.0,434.7 M984.1,281.3 989.6,287.3 994.8,293.4 1000.0,299.6 1004.5,306.2 1007.4,313.7 1009.3,321.6 1009.8,329.7 1010.3,337.8 1010.9,346.0 1011.5,354.1 1012.1,362.3 1012.7,370.4 1013.3,378.5 1013.9,386.7 1014.7,394.8 1015.6,402.9 1016.4,411.0 1017.2,419.1 1018.0,427.2 1018.5,435.3 M990.0,286.0 995.5,291.8 1000.9,297.6 1006.3,303.5 1011.1,309.8 1014.2,317.1 1016.2,324.8 1016.7,332.8 1017.2,340.7 1017.9,348.7 1018.5,356.6 1019.1,364.6 1019.8,372.5 1020.4,380.5 1021.0,388.4 1022.0,396.3 1022.9,404.3 1023.8,412.2 1024.6,420.1 1025.4,428.1 1026.0,436.0 M872.0,194.0 877.3,199.3 882.8,204.4 888.6,209.2 894.3,214.0 900.2,218.6 906.3,223.0 912.3,227.4 918.4,231.8 924.3,236.5 930.1,241.2 935.9,245.9 941.7,250.6 947.4,255.6 953.1,260.5 959.1,265.0 965.4,269.0 971.7,273.0 978.1,276.9 984.1,281.3 990.0,286.0 M878.0,203.2 883.3,208.3 888.8,213.2 894.6,217.8 900.3,222.4 906.1,226.9 912.2,231.2 918.2,235.5 924.2,239.7 930.1,244.2 935.9,248.7 941.7,253.3 947.5,257.8 953.1,262.6 958.8,267.3 964.7,271.6 971.0,275.5 977.3,279.3 983.6,283.1 989.6,287.3 995.5,291.8 M878.0,214.4 883.6,219.2 889.4,223.8 895.4,228.2 901.4,232.5 907.6,236.8 913.8,240.8 920.1,244.8 926.4,248.8 932.6,253.0 938.6,257.3 944.7,261.5 950.8,265.8 956.7,270.3 962.7,274.7 968.9,278.8 975.4,282.4 981.9,286.0 988.6,289.4 994.8,293.4 1000.9,297.6 M878.0,225.6 883.9,230.1 890.0,234.4 896.3,238.5 902.6,242.6 909.0,246.6 915.5,250.4 922.1,254.2 928.6,257.9 935.0,261.8 941.4,265.8 947.7,269.8 954.1,273.9 960.3,278.0 966.5,282.2 973.0,285.9 979.8,289.3 986.6,292.6 993.4,295.8 1000.0,299.6 1006.3,303.5 M878.0,236.8 884.2,241.1 890.5,245.1 897.1,249.0 903.6,252.9 910.2,256.6 917.0,260.2 923.8,263.7 930.6,267.2 937.2,270.9 943.8,274.7 950.4,278.4 957.0,282.2 963.5,286.1 969.9,290.0 976.7,293.5 983.6,296.6 990.7,299.8 997.7,302.7 1004.5,306.2 1011.1,309.8 M878.0,248.0 884.4,252.0 890.9,255.9 897.6,259.6 904.3,263.3 911.0,266.8 918.0,270.2 924.9,273.6 931.8,276.9 938.6,280.4 945.4,284.0 952.1,287.5 958.9,291.1 965.5,294.8 972.2,298.5 979.0,301.8 986.2,304.7 993.3,307.6 1000.5,310.5 1007.4,313.7 1014.2,317.1 M878.0,259.2 884.5,263.0 891.1,266.7 897.9,270.2 904.7,273.7 911.6,277.1 918.6,280.3 925.6,283.6 932.6,286.7 939.5,290.1 946.4,293.4 953.2,296.8 960.1,300.2 966.8,303.7 973.6,307.2 980.6,310.3 987.8,313.1 995.0,315.8 1002.3,318.5 1009.3,321.6 1016.2,324.8 M878.0,270.4 884.5,274.1 891.2,277.6 898.0,280.9 904.9,284.2 911.8,287.5 918.8,290.6 925.8,293.7 932.9,296.7 939.8,299.8 946.7,303.0 953.6,306.3 960.4,309.5 967.2,312.8 974.0,316.1 981.0,319.1 988.2,321.7 995.4,324.3 1002.7,326.8 1009.8,329.7 1016.7,332.8 M878.0,281.6 884.6,285.1 891.3,288.4 898.2,291.6 905.0,294.8 912.0,297.9 919.0,300.8 926.1,303.8 933.1,306.6 940.1,309.6 947.0,312.7 953.9,315.7 960.8,318.8 967.6,321.9 974.4,325.1 981.5,327.8 988.7,330.3 995.9,332.8 1003.2,335.1 1010.3,337.8 1017.2,340.7 M878.0,292.8 884.6,296.1 891.4,299.3 898.3,302.3 905.2,305.3 912.2,308.2 919.3,311.0 926.3,313.8 933.4,316.6 940.4,319.4 947.3,322.3 954.3,325.2 961.2,328.0 968.1,331.0 975.0,334.0 982.0,336.6 989.3,338.9 996.5,341.2 1003.8,343.4 1010.9,346.0 1017.9,348.7 M878.0,304.0 884.7,307.1 891.5,310.1 898.4,313.0 905.4,315.8 912.4,318.6 919.5,321.3 926.6,323.9 933.7,326.5 940.7,329.2 947.7,331.9 954.7,334.6 961.6,337.3 968.6,340.1 975.5,342.9 982.6,345.3 989.8,347.5 997.1,349.7 1004.4,351.7 1011.5,354.1 1018.5,356.6 M877.9,315.2 884.6,318.1 891.5,320.9 898.5,323.6 905.5,326.3 912.5,329.0 919.6,331.5 926.7,334.0 933.9,336.5 940.9,339.0 948.0,341.5 955.0,344.0 962.0,346.6 969.0,349.2 975.9,351.8 983.1,354.1 990.3,356.1 997.6,358.1 1004.9,360.0 1012.1,362.3 1019.1,364.6 M877.8,326.4 884.6,329.1 891.5,331.8 898.6,334.3 905.6,336.9 912.7,339.4 919.8,341.7 926.9,344.1 934.1,346.4 941.2,348.7 948.3,351.1 955.3,353.5 962.4,355.9 969.4,358.3 976.4,360.8 983.6,362.8 990.9,364.7 998.2,366.6 1005.5,368.4 1012.7,370.4 1019.8,372.5 M877.7,337.6 884.6,340.2 891.6,342.6 898.6,345.0 905.7,347.4 912.8,349.7 920.0,352.0 927.1,354.2 934.3,356.3 941.5,358.5 948.6,360.7 955.7,362.9 962.8,365.2 969.8,367.4 976.9,369.7 984.1,371.6 991.4,373.3 998.7,375.0 1006.1,376.7 1013.3,378.5 1020.4,380.5 M877.6,348.8 884.5,351.2 891.6,353.5 898.7,355.7 905.8,357.9 912.9,360.1 920.1,362.2 927.3,364.3 934.6,366.3 941.7,368.3 948.9,370.3 956.0,372.4 963.2,374.4 970.3,376.5 977.4,378.6 984.6,380.3 991.9,381.9 999.3,383.5 1006.6,385.0 1013.9,386.7 1021.0,388.4 M877.5,360.0 884.5,362.2 891.6,364.3 898.8,366.4 906.0,368.4 913.1,370.5 920.4,372.4 927.6,374.4 934.9,376.2 942.1,378.1 949.3,379.9 956.5,381.8 963.7,383.7 970.9,385.6 978.0,387.5 985.3,389.1 992.7,390.5 1000.0,391.9 1007.4,393.2 1014.7,394.8 1022.0,396.3 M877.4,371.2 884.5,373.2 891.7,375.2 898.9,377.1 906.1,379.0 913.4,380.8 920.6,382.6 927.9,384.5 935.2,386.1 942.5,387.8 949.7,389.5 957.0,391.3 964.3,393.0 971.5,394.7 978.7,396.4 986.0,397.8 993.4,399.0 1000.8,400.3 1008.2,401.5 1015.6,402.9 1022.9,404.3 M877.3,382.4 884.5,384.2 891.7,386.0 899.0,387.7 906.3,389.5 913.6,391.2 920.9,392.9 928.2,394.6 935.6,396.1 942.9,397.6 950.2,399.1 957.5,400.7 964.8,402.2 972.1,403.8 979.4,405.3 986.8,406.5 994.2,407.6 1001.6,408.7 1009.1,409.8 1016.4,411.0 1023.8,412.2 M877.2,393.6 884.5,395.2 891.8,396.8 899.1,398.4 906.4,400.0 913.8,401.6 921.1,403.1 928.5,404.6 935.9,406.0 943.2,407.4 950.6,408.8 957.9,410.1 965.3,411.5 972.7,412.9 980.0,414.3 987.4,415.3 994.9,416.2 1002.3,417.2 1009.8,418.1 1017.2,419.1 1024.6,420.1 M877.1,404.8 884.4,406.2 891.8,407.7 899.2,409.1 906.6,410.5 913.9,411.9 921.3,413.3 928.7,414.7 936.1,415.9 943.6,417.2 951.0,418.4 958.4,419.6 965.8,420.8 973.2,422.0 980.6,423.2 988.1,424.0 995.5,424.8 1003.0,425.6 1010.5,426.4 1018.0,427.2 1025.4,428.1 M877.0,416.0 884.4,417.3 891.8,418.5 899.2,419.8 906.7,421.0 914.1,422.3 921.5,423.6 928.9,424.8 936.3,425.9 943.8,426.9 951.2,428.0 958.7,429.0 966.1,430.1 973.6,431.1 981.0,432.1 988.5,432.7 996.0,433.4 1003.5,434.0 1011.0,434.7 1018.5,435.3 1026.0,436.0 M878.0,203.2 877.3,199.3 M878.0,214.4 883.3,208.3 882.8,204.4 M878.0,225.6 883.6,219.2 888.8,213.2 888.6,209.2 M878.0,236.8 883.9,230.1 889.4,223.8 894.6,217.8 894.3,214.0 M878.0,248.0 884.2,241.1 890.0,234.4 895.4,228.2 900.3,222.4 900.2,218.6 M878.0,259.2 884.4,252.0 890.5,245.1 896.3,238.5 901.4,232.5 906.1,226.9 906.3,223.0 M878.0,270.4 884.5,263.0 890.9,255.9 897.1,249.0 902.6,242.6 907.6,236.8 912.2,231.2 912.3,227.4 M878.0,281.6 884.5,274.1 891.1,266.7 897.6,259.6 903.6,252.9 909.0,246.6 913.8,240.8 918.2,235.5 918.4,231.8 M878.0,292.8 884.6,285.1 891.2,277.6 897.9,270.2 904.3,263.3 910.2,256.6 915.5,250.4 920.1,244.8 924.2,239.7 924.3,236.5 M878.0,304.0 884.6,296.1 891.3,288.4 898.0,280.9 904.7,273.7 911.0,266.8 917.0,260.2 922.1,254.2 926.4,248.8 930.1,244.2 930.1,241.2 M877.9,315.2 884.7,307.1 891.4,299.3 898.2,291.6 904.9,284.2 911.6,277.1 918.0,270.2 923.8,263.7 928.6,257.9 932.6,253.0 935.9,248.7 935.9,245.9 M877.8,326.4 884.6,318.1 891.5,310.1 898.3,302.3 905.0,294.8 911.8,287.5 918.6,280.3 924.9,273.6 930.6,267.2 935.0,261.8 938.6,257.3 941.7,253.3 941.7,250.6 M877.7,337.6 884.6,329.1 891.5,320.9 898.4,313.0 905.2,305.3 912.0,297.9 918.8,290.6 925.6,283.6 931.8,276.9 937.2,270.9 941.4,265.8 944.7,261.5 947.5,257.8 947.4,255.6 M877.6,348.8 884.6,340.2 891.5,331.8 898.5,323.6 905.4,315.8 912.2,308.2 919.0,300.8 925.8,293.7 932.6,286.7 938.6,280.4 943.8,274.7 947.7,269.8 950.8,265.8 953.1,262.6 953.1,260.5 M877.5,360.0 884.5,351.2 891.6,342.6 898.6,334.3 905.5,326.3 912.4,318.6 919.3,311.0 926.1,303.8 932.9,296.7 939.5,290.1 945.4,284.0 950.4,278.4 954.1,273.9 956.7,270.3 958.8,267.3 959.1,265.0 M877.4,371.2 884.5,362.2 891.6,353.5 898.6,345.0 905.6,336.9 912.5,329.0 919.5,321.3 926.3,313.8 933.1,306.6 939.8,299.8 946.4,293.4 952.1,287.5 957.0,282.2 960.3,278.0 962.7,274.7 964.7,271.6 965.4,269.0 M877.3,382.4 884.5,373.2 891.6,364.3 898.7,355.7 905.7,347.4 912.7,339.4 919.6,331.5 926.6,323.9 933.4,316.6 940.1,309.6 946.7,303.0 953.2,296.8 958.9,291.1 963.5,286.1 966.5,282.2 968.9,278.8 971.0,275.5 971.7,273.0 M877.2,393.6 884.5,384.2 891.7,375.2 898.8,366.4 905.8,357.9 912.8,349.7 919.8,341.7 926.7,334.0 933.7,326.5 940.4,319.4 947.0,312.7 953.6,306.3 960.1,300.2 965.5,294.8 969.9,290.0 973.0,285.9 975.4,282.4 977.3,279.3 978.1,276.9 M877.1,404.8 884.5,395.2 891.7,386.0 898.9,377.1 906.0,368.4 912.9,360.1 920.0,352.0 926.9,344.1 933.9,336.5 940.7,329.2 947.3,322.3 953.9,315.7 960.4,309.5 966.8,303.7 972.2,298.5 976.7,293.5 979.8,289.3 981.9,286.0 983.6,283.1 984.1,281.3 M877.0,416.0 884.4,406.2 891.8,396.8 899.0,387.7 906.1,379.0 913.1,370.5 920.1,362.2 927.1,354.2 934.1,346.4 940.9,339.0 947.7,331.9 954.3,325.2 960.8,318.8 967.2,312.8 973.6,307.2 979.0,301.8 983.6,296.6 986.6,292.6 988.6,289.4 989.6,287.3 990.0,286.0 M884.4,417.3 891.8,407.7 899.1,398.4 906.3,389.5 913.4,380.8 920.4,372.4 927.3,364.3 934.3,356.3 941.2,348.7 948.0,341.5 954.7,334.6 961.2,328.0 967.6,321.9 974.0,316.1 980.6,310.3 986.2,304.7 990.7,299.8 993.4,295.8 994.8,293.4 995.5,291.8 M891.8,418.5 899.2,409.1 906.4,400.0 913.6,391.2 920.6,382.6 927.6,374.4 934.6,366.3 941.5,358.5 948.3,351.1 955.0,344.0 961.6,337.3 968.1,331.0 974.4,325.1 981.0,319.1 987.8,313.1 993.3,307.6 997.7,302.7 1000.0,299.6 1000.9,297.6 M899.2,419.8 906.6,410.5 913.8,401.6 920.9,392.9 927.9,384.5 934.9,376.2 941.7,368.3 948.6,360.7 955.3,353.5 962.0,346.6 968.6,340.1 975.0,334.0 981.5,327.8 988.2,321.7 995.0,315.8 1000.5,310.5 1004.5,306.2 1006.3,303.5 M906.7,421.0 913.9,411.9 921.1,403.1 928.2,394.6 935.2,386.1 942.1,378.1 948.9,370.3 955.7,362.9 962.4,355.9 969.0,349.2 975.5,342.9 982.0,336.6 988.7,330.3 995.4,324.3 1002.3,318.5 1007.4,313.7 1011.1,309.8 M914.1,422.3 921.3,413.3 928.5,404.6 935.6,396.1 942.5,387.8 949.3,379.9 956.0,372.4 962.8,365.2 969.4,358.3 975.9,351.8 982.6,345.3 989.3,338.9 995.9,332.8 1002.7,326.8 1009.3,321.6 1014.2,317.1 M921.5,423.6 928.7,414.7 935.9,406.0 942.9,397.6 949.7,389.5 956.5,381.8 963.2,374.4 969.8,367.4 976.4,360.8 983.1,354.1 989.8,347.5 996.5,341.2 1003.2,335.1 1009.8,329.7 1016.2,324.8 M928.9,424.8 936.1,415.9 943.2,407.4 950.2,399.1 957.0,391.3 963.7,383.7 970.3,376.5 976.9,369.7 983.6,362.8 990.3,356.1 997.1,349.7 1003.8,343.4 1010.3,337.8 1016.7,332.8 M936.3,425.9 943.6,417.2 950.6,408.8 957.5,400.7 964.3,393.0 970.9,385.6 977.4,378.6 984.1,371.6 990.9,364.7 997.6,358.1 1004.4,351.7 1010.9,346.0 1017.2,340.7 M943.8,426.9 951.0,418.4 957.9,410.1 964.8,402.2 971.5,394.7 978.0,387.5 984.6,380.3 991.4,373.3 998.2,366.6 1004.9,360.0 1011.5,354.1 1017.9,348.7 M951.2,428.0 958.4,419.6 965.3,411.5 972.1,403.8 978.7,396.4 985.3,389.1 991.9,381.9 998.7,375.0 1005.5,368.4 1012.1,362.3 1018.5,356.6 M958.7,429.0 965.8,420.8 972.7,412.9 979.4,405.3 986.0,397.8 992.7,390.5 999.3,383.5 1006.1,376.7 1012.7,370.4 1019.1,364.6 M966.1,430.1 973.2,422.0 980.0,414.3 986.8,406.5 993.4,399.0 1000.0,391.9 1006.6,385.0 1013.3,378.5 1019.8,372.5 M973.6,431.1 980.6,423.2 987.4,415.3 994.2,407.6 1000.8,400.3 1007.4,393.2 1013.9,386.7 1020.4,380.5 M981.0,432.1 988.1,424.0 994.9,416.2 1001.6,408.7 1008.2,401.5 1014.7,394.8 1021.0,388.4 M988.5,432.7 995.5,424.8 1002.3,417.2 1009.1,409.8 1015.6,402.9 1022.0,396.3 M996.0,433.4 1003.0,425.6 1009.8,418.1 1016.4,411.0 1022.9,404.3 M1003.5,434.0 1010.5,426.4 1017.2,419.1 1023.8,412.2 M1011.0,434.7 1018.0,427.2 1024.6,420.1 M1018.5,435.3 1025.4,428.1" fill="none" stroke="#183462" stroke-width="0.8" stroke-opacity="1"/>
<path d="M877.0,416.0 885.7,417.5 894.4,419.0 903.2,420.4 911.9,421.9 920.6,423.4 929.3,424.9 938.1,426.1 946.9,427.4 955.6,428.6 964.4,429.8 973.2,431.0 981.9,432.2 990.7,432.9 999.6,433.7 1008.4,434.5 1017.2,435.2 1026.0,436.0 M872.4,421.5 881.0,423.3 889.6,425.1 898.2,426.8 906.9,428.6 915.6,430.2 924.3,431.9 933.1,433.3 941.8,434.6 950.6,436.0 959.4,437.3 968.2,438.6 976.9,439.8 985.8,440.7 994.6,441.5 1003.4,442.3 1012.3,443.1 1021.1,444.0 M867.8,427.0 876.2,429.1 884.7,431.2 893.3,433.2 901.9,435.2 910.5,437.1 919.2,438.8 928.0,440.4 936.8,441.8 945.5,443.3 954.3,444.7 963.1,446.1 971.9,447.4 980.7,448.4 989.6,449.2 998.4,450.1 1007.3,451.0 1016.1,451.9 M863.2,432.5 871.5,434.9 879.8,437.3 888.3,439.6 896.9,441.8 905.5,443.9 914.2,445.8 922.9,447.4 931.7,449.1 940.5,450.6 949.2,452.1 958.0,453.6 966.8,455.0 975.7,456.0 984.5,457.0 993.4,457.9 1002.3,458.8 1011.1,459.8 M858.6,437.9 866.7,440.7 875.0,443.5 883.4,446.0 891.9,448.4 900.5,450.7 909.2,452.8 917.9,454.6 926.7,456.3 935.5,458.0 944.3,459.6 953.1,461.2 961.9,462.7 970.8,463.8 979.6,464.8 988.5,465.8 997.4,466.8 1006.3,467.8 M853.9,443.4 861.9,446.5 870.1,449.6 878.4,452.4 886.9,455.0 895.4,457.5 904.1,459.8 912.9,461.7 921.6,463.6 930.4,465.3 939.2,467.1 948.1,468.8 956.9,470.3 965.8,471.5 974.7,472.6 983.6,473.6 992.5,474.7 1001.4,475.9 M849.1,448.7 857.0,452.2 865.0,455.5 873.2,458.7 881.7,461.5 890.2,464.2 898.9,466.6 907.7,468.7 916.4,470.7 925.2,472.6 934.1,474.4 942.9,476.2 951.8,477.8 960.7,479.2 969.6,480.3 978.6,481.4 987.5,482.5 996.4,483.7 M844.3,454.0 852.1,457.8 860.0,461.5 868.1,464.9 876.5,468.0 885.0,470.9 893.7,473.5 902.5,475.7 911.2,477.8 920.1,479.8 928.9,481.8 937.7,483.7 946.6,485.3 955.6,486.8 964.5,487.9 973.5,489.1 982.4,490.4 991.4,491.6 M839.5,459.3 847.1,463.5 854.9,467.5 863.0,471.2 871.4,474.4 879.8,477.6 888.5,480.3 897.2,482.6 906.0,485.0 914.9,487.1 923.7,489.1 932.6,491.1 941.5,492.9 950.4,494.4 959.4,495.6 968.4,496.9 977.3,498.2 986.3,499.5 M834.7,464.7 842.2,469.1 849.8,473.4 857.8,477.4 866.1,480.9 874.5,484.2 883.1,487.1 891.9,489.5 900.6,491.9 909.5,494.1 918.3,496.3 927.1,498.4 936.0,500.2 945.0,501.8 953.9,503.1 962.9,504.3 971.9,505.7 980.8,507.1 M829.9,470.0 837.3,474.8 844.8,479.4 852.6,483.6 860.9,487.3 869.2,490.8 877.8,493.8 886.5,496.4 895.2,498.9 904.0,501.2 912.8,503.5 921.7,505.6 930.6,507.5 939.5,509.2 948.5,510.5 957.4,511.8 966.4,513.2 975.3,514.7 M825.2,475.4 832.3,480.4 839.7,485.4 847.4,489.8 855.6,493.7 863.9,497.4 872.4,500.6 881.1,503.3 889.8,505.9 898.6,508.3 907.4,510.7 916.2,512.9 925.1,514.8 934.0,516.6 943.0,517.9 951.9,519.3 960.9,520.7 969.8,522.3 M820.5,480.8 827.5,486.2 834.7,491.4 842.3,496.1 850.4,500.2 858.6,504.0 867.1,507.4 875.7,510.1 884.4,512.9 893.2,515.4 901.9,517.8 910.7,520.1 919.6,522.1 928.5,523.9 937.4,525.3 946.4,526.7 955.3,528.2 964.2,529.7 M816.6,486.8 823.4,492.5 830.3,497.9 837.8,502.8 845.7,507.0 853.8,511.0 862.1,514.5 870.7,517.3 879.3,520.1 888.0,522.6 896.6,525.1 905.3,527.4 914.1,529.3 922.9,531.2 931.8,532.6 940.6,533.9 949.4,535.4 958.3,537.0 M812.7,492.8 819.2,498.7 826.0,504.4 833.2,509.5 841.0,513.8 848.9,517.9 857.1,521.4 865.5,524.3 874.0,527.1 882.5,529.7 891.1,532.1 899.7,534.5 908.4,536.4 917.0,538.3 925.8,539.6 934.5,540.9 943.3,542.4 952.0,543.9 M809.4,499.2 815.5,505.2 821.9,511.0 828.8,516.1 836.3,520.5 844.0,524.6 851.9,528.0 860.1,530.8 868.3,533.6 876.7,536.0 885.0,538.4 893.4,540.6 901.8,542.4 910.3,544.2 918.8,545.3 927.3,546.5 935.8,547.8 944.3,549.2 M806.2,505.6 811.9,511.6 817.9,517.4 824.4,522.5 831.6,526.9 838.9,530.9 846.6,534.2 854.5,536.8 862.4,539.5 870.5,541.7 878.5,543.9 886.6,545.9 894.8,547.5 903.0,549.1 911.2,550.0 919.5,550.9 927.7,552.0 935.9,553.2 M803.0,512.0 808.3,518.0 813.8,523.8 819.9,528.8 826.7,533.0 833.7,536.8 841.0,539.9 848.6,542.4 856.2,544.8 863.9,546.7 871.7,548.7 879.5,550.4 887.3,551.7 895.2,553.0 903.2,553.6 911.1,554.3 919.1,555.1 927.0,556.0 M877.0,416.0 872.4,421.5 867.8,427.0 863.2,432.5 858.6,437.9 853.9,443.4 849.1,448.7 844.3,454.0 839.5,459.3 834.7,464.7 829.9,470.0 825.2,475.4 820.5,480.8 816.6,486.8 812.7,492.8 809.4,499.2 806.2,505.6 803.0,512.0 M885.7,417.5 881.0,423.3 876.2,429.1 871.5,434.9 866.7,440.7 861.9,446.5 857.0,452.2 852.1,457.8 847.1,463.5 842.2,469.1 837.3,474.8 832.3,480.4 827.5,486.2 823.4,492.5 819.2,498.7 815.5,505.2 811.9,511.6 808.3,518.0 M894.4,419.0 889.6,425.1 884.7,431.2 879.8,437.3 875.0,443.5 870.1,449.6 865.0,455.5 860.0,461.5 854.9,467.5 849.8,473.4 844.8,479.4 839.7,485.4 834.7,491.4 830.3,497.9 826.0,504.4 821.9,511.0 817.9,517.4 813.8,523.8 M903.2,420.4 898.2,426.8 893.3,433.2 888.3,439.6 883.4,446.0 878.4,452.4 873.2,458.7 868.1,464.9 863.0,471.2 857.8,477.4 852.6,483.6 847.4,489.8 842.3,496.1 837.8,502.8 833.2,509.5 828.8,516.1 824.4,522.5 819.9,528.8 M911.9,421.9 906.9,428.6 901.9,435.2 896.9,441.8 891.9,448.4 886.9,455.0 881.7,461.5 876.5,468.0 871.4,474.4 866.1,480.9 860.9,487.3 855.6,493.7 850.4,500.2 845.7,507.0 841.0,513.8 836.3,520.5 831.6,526.9 826.7,533.0 M920.6,423.4 915.6,430.2 910.5,437.1 905.5,443.9 900.5,450.7 895.4,457.5 890.2,464.2 885.0,470.9 879.8,477.6 874.5,484.2 869.2,490.8 863.9,497.4 858.6,504.0 853.8,511.0 848.9,517.9 844.0,524.6 838.9,530.9 833.7,536.8 M929.3,424.9 924.3,431.9 919.2,438.8 914.2,445.8 909.2,452.8 904.1,459.8 898.9,466.6 893.7,473.5 888.5,480.3 883.1,487.1 877.8,493.8 872.4,500.6 867.1,507.4 862.1,514.5 857.1,521.4 851.9,528.0 846.6,534.2 841.0,539.9 M938.1,426.1 933.1,433.3 928.0,440.4 922.9,447.4 917.9,454.6 912.9,461.7 907.7,468.7 902.5,475.7 897.2,482.6 891.9,489.5 886.5,496.4 881.1,503.3 875.7,510.1 870.7,517.3 865.5,524.3 860.1,530.8 854.5,536.8 848.6,542.4 M946.9,427.4 941.8,434.6 936.8,441.8 931.7,449.1 926.7,456.3 921.6,463.6 916.4,470.7 911.2,477.8 906.0,485.0 900.6,491.9 895.2,498.9 889.8,505.9 884.4,512.9 879.3,520.1 874.0,527.1 868.3,533.6 862.4,539.5 856.2,544.8 M955.6,428.6 950.6,436.0 945.5,443.3 940.5,450.6 935.5,458.0 930.4,465.3 925.2,472.6 920.1,479.8 914.9,487.1 909.5,494.1 904.0,501.2 898.6,508.3 893.2,515.4 888.0,522.6 882.5,529.7 876.7,536.0 870.5,541.7 863.9,546.7 M964.4,429.8 959.4,437.3 954.3,444.7 949.2,452.1 944.3,459.6 939.2,467.1 934.1,474.4 928.9,481.8 923.7,489.1 918.3,496.3 912.8,503.5 907.4,510.7 901.9,517.8 896.6,525.1 891.1,532.1 885.0,538.4 878.5,543.9 871.7,548.7 M973.2,431.0 968.2,438.6 963.1,446.1 958.0,453.6 953.1,461.2 948.1,468.8 942.9,476.2 937.7,483.7 932.6,491.1 927.1,498.4 921.7,505.6 916.2,512.9 910.7,520.1 905.3,527.4 899.7,534.5 893.4,540.6 886.6,545.9 879.5,550.4 M981.9,432.2 976.9,439.8 971.9,447.4 966.8,455.0 961.9,462.7 956.9,470.3 951.8,477.8 946.6,485.3 941.5,492.9 936.0,500.2 930.6,507.5 925.1,514.8 919.6,522.1 914.1,529.3 908.4,536.4 901.8,542.4 894.8,547.5 887.3,551.7 M990.7,432.9 985.8,440.7 980.7,448.4 975.7,456.0 970.8,463.8 965.8,471.5 960.7,479.2 955.6,486.8 950.4,494.4 945.0,501.8 939.5,509.2 934.0,516.6 928.5,523.9 922.9,531.2 917.0,538.3 910.3,544.2 903.0,549.1 895.2,553.0 M999.6,433.7 994.6,441.5 989.6,449.2 984.5,457.0 979.6,464.8 974.7,472.6 969.6,480.3 964.5,487.9 959.4,495.6 953.9,503.1 948.5,510.5 943.0,517.9 937.4,525.3 931.8,532.6 925.8,539.6 918.8,545.3 911.2,550.0 903.2,553.6 M1008.4,434.5 1003.4,442.3 998.4,450.1 993.4,457.9 988.5,465.8 983.6,473.6 978.6,481.4 973.5,489.1 968.4,496.9 962.9,504.3 957.4,511.8 951.9,519.3 946.4,526.7 940.6,533.9 934.5,540.9 927.3,546.5 919.5,550.9 911.1,554.3 M1017.2,435.2 1012.3,443.1 1007.3,451.0 1002.3,458.8 997.4,466.8 992.5,474.7 987.5,482.5 982.4,490.4 977.3,498.2 971.9,505.7 966.4,513.2 960.9,520.7 955.3,528.2 949.4,535.4 943.3,542.4 935.8,547.8 927.7,552.0 919.1,555.1 M1026.0,436.0 1021.1,444.0 1016.1,451.9 1011.1,459.8 1006.3,467.8 1001.4,475.9 996.4,483.7 991.4,491.6 986.3,499.5 980.8,507.1 975.3,514.7 969.8,522.3 964.2,529.7 958.3,537.0 952.0,543.9 944.3,549.2 935.9,553.2 927.0,556.0 M806.2,505.6 808.3,518.0 M809.4,499.2 811.9,511.6 813.8,523.8 M812.7,492.8 815.5,505.2 817.9,517.4 819.9,528.8 M816.6,486.8 819.2,498.7 821.9,511.0 824.4,522.5 826.7,533.0 M820.5,480.8 823.4,492.5 826.0,504.4 828.8,516.1 831.6,526.9 833.7,536.8 M825.2,475.4 827.5,486.2 830.3,497.9 833.2,509.5 836.3,520.5 838.9,530.9 841.0,539.9 M829.9,470.0 832.3,480.4 834.7,491.4 837.8,502.8 841.0,513.8 844.0,524.6 846.6,534.2 848.6,542.4 M834.7,464.7 837.3,474.8 839.7,485.4 842.3,496.1 845.7,507.0 848.9,517.9 851.9,528.0 854.5,536.8 856.2,544.8 M839.5,459.3 842.2,469.1 844.8,479.4 847.4,489.8 850.4,500.2 853.8,511.0 857.1,521.4 860.1,530.8 862.4,539.5 863.9,546.7 M844.3,454.0 847.1,463.5 849.8,473.4 852.6,483.6 855.6,493.7 858.6,504.0 862.1,514.5 865.5,524.3 868.3,533.6 870.5,541.7 871.7,548.7 M849.1,448.7 852.1,457.8 854.9,467.5 857.8,477.4 860.9,487.3 863.9,497.4 867.1,507.4 870.7,517.3 874.0,527.1 876.7,536.0 878.5,543.9 879.5,550.4 M853.9,443.4 857.0,452.2 860.0,461.5 863.0,471.2 866.1,480.9 869.2,490.8 872.4,500.6 875.7,510.1 879.3,520.1 882.5,529.7 885.0,538.4 886.6,545.9 887.3,551.7 M858.6,437.9 861.9,446.5 865.0,455.5 868.1,464.9 871.4,474.4 874.5,484.2 877.8,493.8 881.1,503.3 884.4,512.9 888.0,522.6 891.1,532.1 893.4,540.6 894.8,547.5 895.2,553.0 M863.2,432.5 866.7,440.7 870.1,449.6 873.2,458.7 876.5,468.0 879.8,477.6 883.1,487.1 886.5,496.4 889.8,505.9 893.2,515.4 896.6,525.1 899.7,534.5 901.8,542.4 903.0,549.1 903.2,553.6 M867.8,427.0 871.5,434.9 875.0,443.5 878.4,452.4 881.7,461.5 885.0,470.9 888.5,480.3 891.9,489.5 895.2,498.9 898.6,508.3 901.9,517.8 905.3,527.4 908.4,536.4 910.3,544.2 911.2,550.0 911.1,554.3 M872.4,421.5 876.2,429.1 879.8,437.3 883.4,446.0 886.9,455.0 890.2,464.2 893.7,473.5 897.2,482.6 900.6,491.9 904.0,501.2 907.4,510.7 910.7,520.1 914.1,529.3 917.0,538.3 918.8,545.3 919.5,550.9 919.1,555.1 M877.0,416.0 881.0,423.3 884.7,431.2 888.3,439.6 891.9,448.4 895.4,457.5 898.9,466.6 902.5,475.7 906.0,485.0 909.5,494.1 912.8,503.5 916.2,512.9 919.6,522.1 922.9,531.2 925.8,539.6 927.3,546.5 927.7,552.0 927.0,556.0 M885.7,417.5 889.6,425.1 893.3,433.2 896.9,441.8 900.5,450.7 904.1,459.8 907.7,468.7 911.2,477.8 914.9,487.1 918.3,496.3 921.7,505.6 925.1,514.8 928.5,523.9 931.8,532.6 934.5,540.9 935.8,547.8 935.9,553.2 M894.4,419.0 898.2,426.8 901.9,435.2 905.5,443.9 909.2,452.8 912.9,461.7 916.4,470.7 920.1,479.8 923.7,489.1 927.1,498.4 930.6,507.5 934.0,516.6 937.4,525.3 940.6,533.9 943.3,542.4 944.3,549.2 M903.2,420.4 906.9,428.6 910.5,437.1 914.2,445.8 917.9,454.6 921.6,463.6 925.2,472.6 928.9,481.8 932.6,491.1 936.0,500.2 939.5,509.2 943.0,517.9 946.4,526.7 949.4,535.4 952.0,543.9 M911.9,421.9 915.6,430.2 919.2,438.8 922.9,447.4 926.7,456.3 930.4,465.3 934.1,474.4 937.7,483.7 941.5,492.9 945.0,501.8 948.5,510.5 951.9,519.3 955.3,528.2 958.3,537.0 M920.6,423.4 924.3,431.9 928.0,440.4 931.7,449.1 935.5,458.0 939.2,467.1 942.9,476.2 946.6,485.3 950.4,494.4 953.9,503.1 957.4,511.8 960.9,520.7 964.2,529.7 M929.3,424.9 933.1,433.3 936.8,441.8 940.5,450.6 944.3,459.6 948.1,468.8 951.8,477.8 955.6,486.8 959.4,495.6 962.9,504.3 966.4,513.2 969.8,522.3 M938.1,426.1 941.8,434.6 945.5,443.3 949.2,452.1 953.1,461.2 956.9,470.3 960.7,479.2 964.5,487.9 968.4,496.9 971.9,505.7 975.3,514.7 M946.9,427.4 950.6,436.0 954.3,444.7 958.0,453.6 961.9,462.7 965.8,471.5 969.6,480.3 973.5,489.1 977.3,498.2 980.8,507.1 M955.6,428.6 959.4,437.3 963.1,446.1 966.8,455.0 970.8,463.8 974.7,472.6 978.6,481.4 982.4,490.4 986.3,499.5 M964.4,429.8 968.2,438.6 971.9,447.4 975.7,456.0 979.6,464.8 983.6,473.6 987.5,482.5 991.4,491.6 M973.2,431.0 976.9,439.8 980.7,448.4 984.5,457.0 988.5,465.8 992.5,474.7 996.4,483.7 M981.9,432.2 985.8,440.7 989.6,449.2 993.4,457.9 997.4,466.8 1001.4,475.9 M990.7,432.9 994.6,441.5 998.4,450.1 1002.3,458.8 1006.3,467.8 M999.6,433.7 1003.4,442.3 1007.3,451.0 1011.1,459.8 M1008.4,434.5 1012.3,443.1 1016.1,451.9 M1017.2,435.2 1021.1,444.0" fill="none" stroke="#183462" stroke-width="0.8" stroke-opacity="1"/>
<polyline points="1026,436 1023,441 1011,460 1002,475 986,500 970,522 961,534 951,545" fill="none" stroke="#1e3455" stroke-opacity="0.55" stroke-width="5" transform="translate(-2,-1)"/>
<polyline points="731,410 738,420 747,440 757,457 766,469 778,485 791,499 803,512 817,527 830,535" fill="none" stroke="#1e3455" stroke-opacity="0.4" stroke-width="4" transform="translate(2,-1)"/>
<polygon points="877,206 870,260 863,330 864,390 877,418" fill="#0a1a30" fill-opacity="0.12"/>
<rect x="877.4" y="208" width="1.3" height="182" fill="#c8d048" fill-opacity="0.8"/>
<rect x="877.4" y="390" width="1.4" height="50" fill="#dde3ea" fill-opacity="0.8"/>
</svg>
</body></html>
